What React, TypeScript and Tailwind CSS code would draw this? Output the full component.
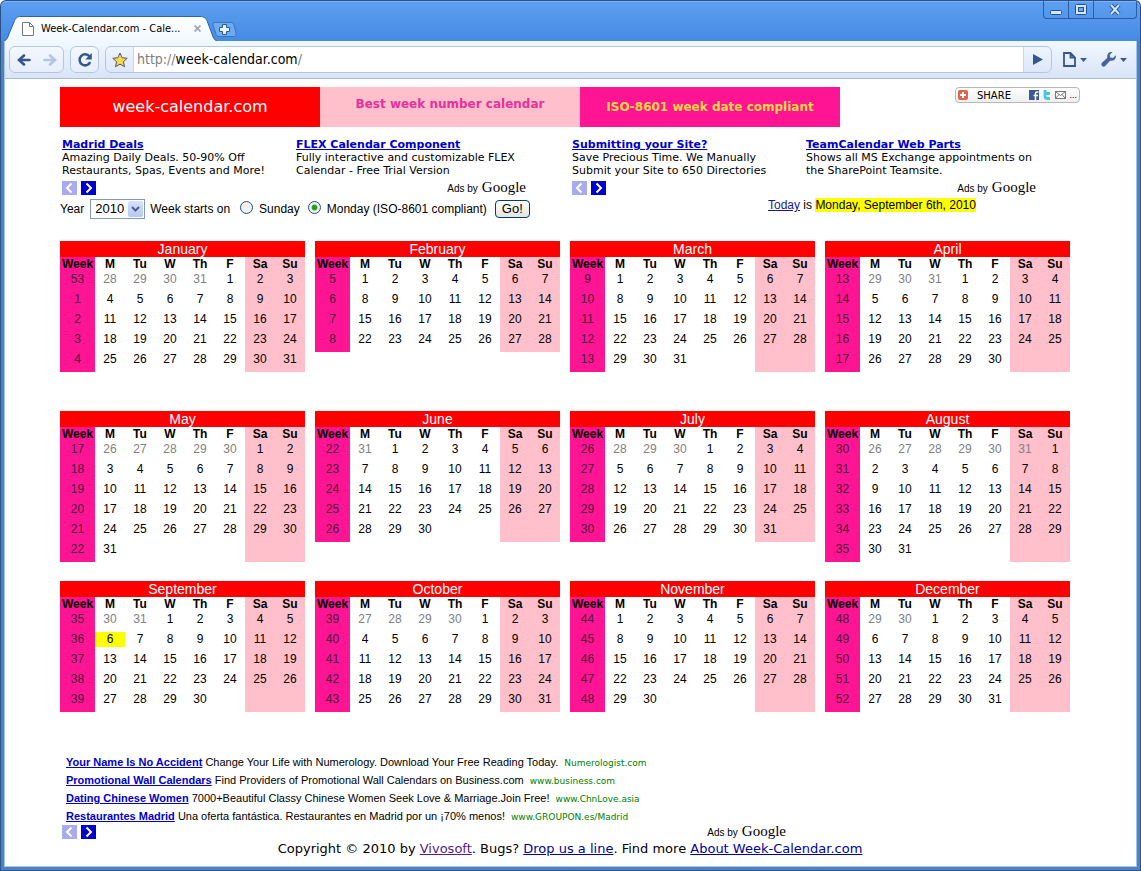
import type { ReactNode } from 'react';
import clsx from 'clsx';

const YEAR = 2010;
const TODAY = new Date(2010, 8, 6);

const MONTHS = [
  'January', 'February', 'March', 'April', 'May', 'June',
  'July', 'August', 'September', 'October', 'November', 'December',
];
const DAYS = ['M', 'Tu', 'W', 'Th', 'F', 'Sa', 'Su'];

interface Day {
  date: Date;
  outside: boolean;
}

interface Week {
  number: number;
  days: (Day | null)[];
}

function isoWeek(date: Date): number {
  const d = new Date(Date.UTC(date.getFullYear(), date.getMonth(), date.getDate()));
  d.setUTCDate(d.getUTCDate() + 4 - (d.getUTCDay() || 7));
  const yearStart = Date.UTC(d.getUTCFullYear(), 0, 1);
  return Math.ceil(((d.getTime() - yearStart) / 86400000 + 1) / 7);
}

function buildWeeks(year: number, month: number): Week[] {
  const offset = (new Date(year, month, 1).getDay() + 6) % 7;
  const total = new Date(year, month + 1, 0).getDate();
  const weeks: Week[] = [];
  for (let start = 1 - offset; start <= total; start += 7) {
    const days = DAYS.map((_, i) => {
      const n = start + i;
      return n > total ? null : { date: new Date(year, month, n), outside: n < 1 };
    });
    weeks.push({ number: isoWeek(new Date(year, month, start)), days });
  }
  return weeks;
}

function Month({ month }: { month: number }) {
  return (
    <table className="w-[245px] table-fixed border-collapse self-start text-center text-xs leading-[15px]">
      <caption className="h-4 bg-[#ff0000] text-sm leading-4 text-white">{MONTHS[month]}</caption>
      <thead>
        <tr className="h-[15px]">
          <th className="w-[35px] bg-[#ff1493] p-0">Week</th>
          {DAYS.map((d, i) => (
            <th key={d} className={clsx('w-[30px] p-0', i > 4 && 'bg-[#ffc0cb]')}>{d}</th>
          ))}
        </tr>
      </thead>
      <tbody>
        {buildWeeks(YEAR, month).map((week) => (
          <tr key={week.number} className="h-5 align-top">
            <td className="bg-[#ff1493] p-0 text-[#4a1838]">{week.number}</td>
            {week.days.map((day, i) => (
              <td key={i} className={clsx('p-0', i > 4 && 'bg-[#ffc0cb]')}>
                {day && (
                  <span
                    className={clsx(
                      'block',
                      day.outside && 'text-[#808080]',
                      day.date.getTime() === TODAY.getTime() && 'bg-[#ffff00]',
                    )}
                  >
                    {day.date.getDate()}
                  </span>
                )}
              </td>
            ))}
          </tr>
        ))}
      </tbody>
    </table>
  );
}

function Arrows() {
  return (
    <div className="flex gap-1">
      <button type="button" aria-label="Previous ads" className="h-[14px] w-[15px] bg-[#aaaaf0]">
        <svg viewBox="0 0 15 14" className="h-[14px] w-[15px]" fill="none" stroke="#fff" strokeWidth="2">
          <path d="M9.5 2.5 5 7l4.500 4.500" />
        </svg>
      </button>
      <button type="button" aria-label="Next ads" className="h-[14px] w-[15px] bg-[#0000cc]">
        <svg viewBox="0 0 15 14" className="h-[14px] w-[15px]" fill="none" stroke="#fff" strokeWidth="2">
          <path d="M5.500 2.500 10 7l-4.500 4.500" />
        </svg>
      </button>
    </div>
  );
}

function AdsByGoogle() {
  return (
    <div className="flex items-baseline gap-1 pr-[2px] text-[10px] leading-[14px] text-black">
      <span>Ads by</span>
      <span className="font-['Liberation_Serif',serif] text-[15px] leading-[14px]">Google</span>
    </div>
  );
}

interface Ad {
  title: string;
  lines: string[];
}

const AD_UNITS: Ad[][] = [
  [
    { title: 'Madrid Deals', lines: ['Amazing Daily Deals. 50-90% Off', 'Restaurants, Spas, Events and More!'] },
    { title: 'FLEX Calendar Component', lines: ['Fully interactive and customizable FLEX', 'Calendar - Free Trial Version'] },
  ],
  [
    { title: 'Submitting your Site?', lines: ['Save Precious Time. We Manually', 'Submit your Site to 650 Directories'] },
    { title: 'TeamCalendar Web Parts', lines: ['Shows all MS Exchange appointments on', 'the SharePoint Teamsite.'] },
  ],
];

const TEXT_ADS = [
  { title: 'Your Name Is No Accident', text: 'Change Your Life with Numerology. Download Your Free Reading Today.', site: 'Numerologist.com' },
  { title: 'Promotional Wall Calendars', text: 'Find Providers of Promotional Wall Calendars on Business.com', site: 'www.business.com' },
  { title: 'Dating Chinese Women', text: '7000+Beautiful Classy Chinese Women Seek Love & Marriage.Join Free!', site: 'www.ChnLove.asia' },
  { title: 'Restaurantes Madrid', text: 'Una oferta fantástica. Restaurantes en Madrid por un ¡70% menos!', site: 'www.GROUPON.es/Madrid' },
];

function AdUnit({ ads }: { ads: Ad[] }) {
  return (
    <section className="w-[468px] font-['DejaVu_Sans',sans-serif]">
      <div className="grid grid-cols-2">
        {ads.map((ad) => (
          <div key={ad.title} className="pl-[2px] text-[11px] leading-[13px] whitespace-nowrap">
            <a href="#" className="block font-bold text-[#0000cc] underline">{ad.title}</a>
            {ad.lines.map((line) => (
              <p key={line}>{line}</p>
            ))}
          </div>
        ))}
      </div>
      <div className="mt-1 flex h-[14px] items-center justify-between pl-[2px] font-['Liberation_Sans',sans-serif]">
        <Arrows />
        <AdsByGoogle />
      </div>
    </section>
  );
}

function TitleBar() {
  return (
    <div className="flex h-[41px] items-end justify-between rounded-t-md border-x border-t border-[#2c4f86] bg-linear-to-b from-[#5c9ff2] to-[#468be4] inset-shadow-[0_1px_#7db4f7]">
      <div className="flex items-end pl-[3px]">
        <div className="relative flex h-[25px] w-[213px] items-center pr-4 pl-[18px]">
          <svg className="absolute inset-0 h-[25px] w-[213px]" viewBox="0 0 213 25">
            <defs>
              <linearGradient id="tab" x1="0" y1="0" x2="0" y2="1">
                <stop offset="0" stopColor="#ffffff" />
                <stop offset="1" stopColor="#f1f8ff" />
              </linearGradient>
            </defs>
            <path
              d="M0 25C3 24 4 21 5 18L10 6C11.500 2 13 .5 17 .5H196C200 .5 202 2 203.500 6L208 18C209 21 210 24 213 25Z"
              fill="url(#tab)"
            />
            <path
              d="M0 25C3 24 4 21 5 18L10 6C11.500 2 13 .5 17 .5H196C200 .5 202 2 203.500 6L208 18C209 21 210 24 213 25"
              fill="none"
              stroke="#2f62a8"
            />
          </svg>
          <svg className="relative h-[14px] w-3" viewBox="0 0 12 14" fill="#fff" stroke="#777">
            <path d="M.5.5h7l4 4v9H.5z M7.500.5v4h4" />
          </svg>
          <span className="relative flex-1 pt-[2px] pl-[7px] font-['DejaVu_Sans_Condensed','DejaVu_Sans',sans-serif] text-[11px] whitespace-nowrap">
            Week-Calendar.com - Cale...
          </span>
          <button type="button" aria-label="Close tab" className="relative">
            <svg className="size-[7px]" viewBox="0 0 7 7" stroke="#a0a8b4" strokeWidth="1.800">
              <path d="m.5.5 6 6m0-6-6 6" />
            </svg>
          </button>
        </div>
        <button type="button" aria-label="New tab" className="-ml-[5px] pb-1">
          <svg className="h-[15px] w-[25px]" viewBox="0 0 25 15">
            <path d="M3 .5h16c2 0 2.500 1 3 2.500l2 8c.5 2-.5 3.500-2 3.500H7c-2 0-2.500-1-3-2.500L1 3C.5 1.500 1 .5 3 .5z" fill="#6fabf3" stroke="#3b74bf" />
            <path d="M10.500 2.500h4v3h3v4h-3v3h-4v-3h-3v-4h3z" fill="#e9f3ff" stroke="#2c5a9c" />
          </svg>
        </button>
      </div>
      <div className="mr-[3px] flex self-start rounded-b border border-t-0 border-[#2c5da3]">
        <button type="button" aria-label="Minimize" className="flex h-[17px] w-[25px] items-center justify-center border-r border-[#2c5da3]">
          <svg className="h-3 w-[14px]" viewBox="0 0 14 12">
            <rect x="1.500" y="6.500" width="11" height="4" rx="1" fill="#d6e6fb" stroke="#23518f" />
          </svg>
        </button>
        <button type="button" aria-label="Maximize" className="flex h-[17px] w-[25px] items-center justify-center border-r border-[#2c5da3]">
          <svg className="h-[11px] w-3" viewBox="0 0 12 11">
            <rect x=".5" y=".5" width="11" height="10" rx="1" fill="#d6e6fb" stroke="#23518f" />
            <rect x="3.500" y="3.500" width="5" height="4" fill="#6ea8ef" stroke="#23518f" />
          </svg>
        </button>
        <button type="button" aria-label="Close" className="flex h-[17px] w-[42px] items-center justify-center">
          <svg className="h-[11px] w-3" viewBox="0 0 12 11">
            <path d="m2 1 8 9m0-9-8 9" stroke="#23518f" strokeWidth="4" />
            <path d="m2 1 8 9m0-9-8 9" stroke="#d6e6fb" strokeWidth="2" />
          </svg>
        </button>
      </div>
    </div>
  );
}

function Caret() {
  return (
    <svg className="h-1 w-[7px]" viewBox="0 0 7 4" fill="#3f5d8f">
      <path d="M0 0h7L3.500 4z" />
    </svg>
  );
}

function Toolbar() {
  return (
    <div className="flex h-[38px] items-center border-b border-[#a9bbd8] bg-linear-to-b from-[#f1f8ff] to-[#d9e4f8] pl-1">
      <div className="flex h-[27px] rounded-md border border-[#b5c6e4] bg-white/30">
        <button type="button" aria-label="Back" className="flex w-[27px] items-center justify-center">
          <svg className="h-3 w-[14px]" viewBox="0 0 14 12" fill="none" stroke="#37568c" strokeWidth="2.600" strokeLinecap="round">
            <path d="M12.500 6H2.500M7 1.500 2 6l5 4.500" />
          </svg>
        </button>
        <button type="button" aria-label="Forward" className="flex w-[26px] items-center justify-center">
          <svg className="h-3 w-[14px]" viewBox="0 0 14 12" fill="none" stroke="#b4c5e2" strokeWidth="2.600" strokeLinecap="round">
            <path d="M1.500 6h10M7 1.500 12 6l-5 4.500" />
          </svg>
        </button>
      </div>
      <button type="button" aria-label="Reload" className="ml-[6px] flex h-[27px] w-[29px] items-center justify-center rounded-md border border-[#b5c6e4] bg-white/30">
        <svg className="size-4" viewBox="0 0 16 16" fill="none">
          <path d="M12.500 4.500A5.500 5.500 0 1 0 13.200 10" stroke="#37568c" strokeWidth="2.500" />
          <path d="M14.800 1v6.500H8.300z" fill="#37568c" />
        </svg>
      </button>
      <div className="ml-[6px] flex h-[27px] flex-1 overflow-hidden rounded-md border border-[#b5c6e4]">
        <button type="button" aria-label="Bookmark this page" className="flex w-7 items-center justify-center border-r border-[#c8d5ec]">
          <svg className="size-4" viewBox="0 0 16 16">
            <path d="m8 1 2.100 4.700 5.100.6-3.800 3.400 1.100 5L8 12.200l-4.500 2.500 1.100-5L.8 6.300l5.100-.6z" fill="#f7d84a" stroke="#51586b" />
          </svg>
        </button>
        <div className="relative flex flex-1 bg-white">
          <input
            type="text"
            aria-label="Address"
            defaultValue="http://week-calendar.com/"
            className="w-full bg-transparent pl-[3px] font-['DejaVu_Sans_Condensed','DejaVu_Sans',sans-serif] text-sm text-transparent outline-none"
          />
          {/* coloured copy of the address, the scheme is greyed out */}
          <span className="pointer-events-none absolute inset-y-0 left-[3px] font-['DejaVu_Sans_Condensed','DejaVu_Sans',sans-serif] text-sm leading-[25px] text-[#808080]">
            http://<span className="text-black">week-calendar.com</span>/
          </span>
        </div>
        <button type="button" aria-label="Go" className="flex w-7 items-center justify-center border-l border-[#c8d5ec]">
          <svg className="h-[11px] w-[10px]" viewBox="0 0 10 11" fill="#37568c">
            <path d="M0 0v11l10-5.500z" />
          </svg>
        </button>
      </div>
      <div className="flex items-center gap-[14px] pr-[9px] pl-[11px]">
        <button type="button" aria-label="Page menu" className="flex items-center gap-1">
          <svg className="h-[15px] w-[13px]" viewBox="0 0 13 15" fill="none" stroke="#37568c" strokeWidth="1.800">
            <path d="M1 1h6.500L12 5.500V14H1z M7.500 1v4.500H12" />
          </svg>
          <Caret />
        </button>
        <button type="button" aria-label="Settings menu" className="flex items-center gap-1">
          <svg className="size-[15px]" viewBox="0 0 15 15">
            <path d="M11.500 0 8.800 2.700l.4 2.800 2.800.4L14.700 3.200c1 3.300-2 6.400-5.400 5.400L4.200 14c-2 2-5.200-1-3.200-3.200l5.400-5C5.400 2.500 8.200-.8 11.500 0z" fill="#46629a" />
          </svg>
          <Caret />
        </button>
      </div>
    </div>
  );
}

function ShareButton() {
  return (
    <button type="button" className="flex h-4 w-[125px] items-center rounded border border-[#b8b8b8] bg-linear-to-b from-white to-[#eeeeee] px-[2px]">
      <svg className="size-[10px]" viewBox="0 0 10 10">
        <rect width="10" height="10" rx="2" fill="#e0654a" />
        <path d="M5 2v6M2 5h6" stroke="#fff" strokeWidth="2" />
      </svg>
      <span className="flex-1 pl-[9px] text-left font-['DejaVu_Sans',sans-serif] text-[10px] leading-[13px]">SHARE</span>
      <svg className="size-[10px]" viewBox="0 0 10 10">
        <rect width="10" height="10" fill="#3b5998" />
        <path d="M9.500 2H8Q6.500 2 6.500 3.500V10M4.500 5.500h4.500" stroke="#fff" strokeWidth="1.500" fill="none" />
      </svg>
      <svg className="ml-1 h-[10px] w-2" viewBox="0 0 8 10" fill="none" stroke="#45c8dc" strokeWidth="2.800">
        <path d="M2 0v6q0 2.500 2.500 2.500H7M2 3.500h5" />
      </svg>
      <svg className="ml-1 h-2 w-[11px]" viewBox="0 0 11 8" fill="#fff" stroke="#555" strokeWidth=".8">
        <path d="M.5.5h10v7H.5z M.5.5l5 4 5-4M.5 7.500l3.500-4M10.500 7.500 7 3.500" />
      </svg>
      <span className="ml-[3px] text-[9px] leading-[13px]">...</span>
    </button>
  );
}

function Option({ id, checked, children }: { id: string; checked?: boolean; children: ReactNode }) {
  return (
    <>
      <input
        type="radio"
        id={id}
        name="start"
        defaultChecked={checked}
        className="mb-1 size-[13px] appearance-none rounded-full border border-[#1d5281] bg-[#f2f1ee] checked:bg-radial checked:from-[#21a121] checked:from-30% checked:to-[#f2f1ee] checked:to-45%"
      />
      <label htmlFor={id} className="ml-[6px]">{children}</label>
    </>
  );
}

export default function App() {
  return (
    <div className="flex min-h-screen flex-col font-['Liberation_Sans',sans-serif] text-black">
      <TitleBar />
      <div className="flex flex-1 flex-col border-x border-b border-[#2f5688] bg-[#4f80bf] px-[3px] pb-[3px]">
        <div className="flex flex-1 flex-col border-x border-b border-[#a3c5ee] bg-white">
          <Toolbar />
          <main className="flex-1 pt-2 pl-[55px]">
            <header className="flex max-w-[1020px] items-start justify-between">
              <div className="grid h-10 w-[780px] grid-cols-3 text-center font-['DejaVu_Sans',sans-serif] text-xs leading-10 font-bold">
                <h1 className="bg-[#ff0000] text-base leading-10 font-normal text-white">week-calendar.com</h1>
                <p className="bg-[#ffc0cb] leading-[34px] text-[#e8309c]">Best week number calendar</p>
                <p className="bg-[#ff1493] text-[#ffd940]">ISO-8601 week date compliant</p>
              </div>
              <ShareButton />
            </header>

            <div className="flex flex-wrap gap-x-[42px] pt-[11px]">
              {AD_UNITS.map((ads) => (
                <AdUnit key={ads[0].title} ads={ads} />
              ))}
            </div>

            <div className="flex h-[46px] text-xs whitespace-nowrap">
              <form className="flex h-7 w-[708px] items-center" onSubmit={(e) => e.preventDefault()}>
                <label htmlFor="year">Year</label>
                <div className="relative mr-[5px] ml-[6px]">
                  <select
                    id="year"
                    defaultValue="2010"
                    className="h-5 w-[55px] appearance-none border border-[#7f9db9] bg-white pl-1 text-[13px] leading-4"
                  >
                    <option>2009</option>
                    <option>2010</option>
                    <option>2011</option>
                  </select>
                  <span className="pointer-events-none absolute top-[2px] right-[2px] flex h-4 w-[15px] items-center justify-center rounded-xs bg-linear-to-b from-[#d5e1fd] to-[#b3c8f5]">
                    <svg className="h-[6px] w-[9px]" viewBox="0 0 9 6" fill="none" stroke="#4d6185" strokeWidth="2">
                      <path d="m1 1 3.500 3.500L8 1" />
                    </svg>
                  </span>
                </div>
                <span className="mr-[10px]">Week starts on</span>
                <Option id="sunday">Sunday</Option>
                <span className="w-2" />
                <Option id="monday" checked>Monday (ISO-8601 compliant)</Option>
                <button type="submit" className="ml-2 h-[18px] w-[35px] rounded-sm border border-[#003c74] bg-linear-to-b from-white to-[#e6e4da] text-[13px] leading-4">
                  Go!
                </button>
              </form>
              <p className="pt-[2px] leading-4">
                <a href="#" className="text-[#1a1a8c] underline">Today</a> is{' '}
                <span className="bg-[#ffff00]">Monday, September 6th, 2010</span>
              </p>
            </div>

            <div className="grid auto-rows-[170px] grid-cols-[repeat(auto-fill,245px)] gap-x-[10px]">
              {MONTHS.map((name, i) => (
                <Month key={name} month={i} />
              ))}
            </div>

            <section className="max-w-[728px] pt-[2px] pl-[2px]">
              <ul className="pl-1 text-[11px] leading-[18px]">
                {TEXT_ADS.map((ad) => (
                  <li key={ad.title} className="h-[18px]">
                    <a href="#" className="font-bold text-[#0000cc] underline">{ad.title}</a> {ad.text}
                    <span className="ml-[6px] font-['DejaVu_Sans',sans-serif] text-[9px] text-[#008000]">{ad.site}</span>
                  </li>
                ))}
              </ul>
              <div className="flex h-[14px] items-center justify-between">
                <Arrows />
                <AdsByGoogle />
              </div>
            </section>
            <footer className="max-w-[1020px] text-center font-['DejaVu_Sans',sans-serif] text-[13px] leading-5">
              Copyright © 2010 by <a href="#" className="text-[#551a8b] underline">Vivosoft</a>. Bugs?{' '}
              <a href="#" className="text-[#0000a0] underline">Drop us a line</a>. Find more{' '}
              <a href="#" className="text-[#0000a0] underline">About Week-Calendar.com</a>
            </footer>
          </main>
        </div>
      </div>
    </div>
  );
}
